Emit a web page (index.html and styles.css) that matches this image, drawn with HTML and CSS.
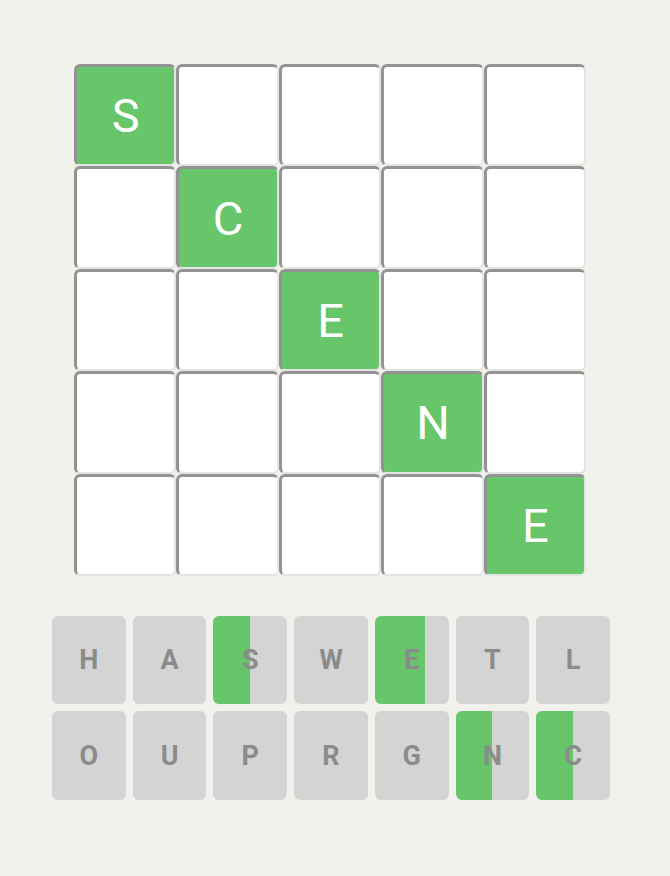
FILE: index.html
```html
<!DOCTYPE html>
<html>
<head>
<meta charset="utf-8">
<link rel="stylesheet" href="styles.css">
</head>
<body>
<main class="page">
  <div class="board">
    <div class="cell hit">S</div><div class="cell"></div><div class="cell"></div><div class="cell"></div><div class="cell"></div>
    <div class="cell"></div><div class="cell hit">C</div><div class="cell"></div><div class="cell"></div><div class="cell"></div>
    <div class="cell"></div><div class="cell"></div><div class="cell hit">E</div><div class="cell"></div><div class="cell"></div>
    <div class="cell"></div><div class="cell"></div><div class="cell"></div><div class="cell hit">N</div><div class="cell"></div>
    <div class="cell"></div><div class="cell"></div><div class="cell"></div><div class="cell"></div><div class="cell hit">E</div>
  </div>
  <div class="keys">
    <div class="key">H</div>
    <div class="key">A</div>
    <div class="key half">S</div>
    <div class="key">W</div>
    <div class="key twothirds">E</div>
    <div class="key">T</div>
    <div class="key">L</div>
    <div class="key">O</div>
    <div class="key">U</div>
    <div class="key">P</div>
    <div class="key">R</div>
    <div class="key">G</div>
    <div class="key half">N</div>
    <div class="key half">C</div>
  </div>
</main>
</body>
</html>
```
FILE: styles.css
```css
html, body {
  margin: 0;
  padding: 0;
  background: #f2f2ed;
}
.page {
  width: 670px;
  height: 876px;
  padding-top: 64px;
  box-sizing: border-box;
  display: flex;
  flex-direction: column;
  align-items: flex-start;
  font-family: Roboto, "Liberation Sans", sans-serif;
}
.board {
  margin-left: 74px;
  width: 512px;
  display: grid;
  grid-template-columns: repeat(5, 1fr);
  grid-auto-rows: 102.4px;
}
.cell {
  box-sizing: border-box;
  background: #ffffff;
  border-style: solid;
  border-width: 3px 2px 2px 3px;
  border-color: #939393 #e4e4e4 #e4e4e4 #939393;
  border-radius: 6px;
  display: flex;
  align-items: center;
  justify-content: center;
  color: #ffffff;
  font-size: 47px;
  font-weight: 400;
}
.cell.hit {
  background: #67c66a;
}
.keys {
  margin-top: 40px;
  margin-left: 52px;
  width: 558px;
  display: grid;
  grid-template-columns: repeat(7, 1fr);
  grid-auto-rows: 88.5px;
  gap: 7px;
}
.key {
  background: #d4d4d4;
  border-radius: 6px;
  display: flex;
  align-items: center;
  justify-content: center;
  color: #8b8b8b;
  font-size: 27px;
  font-weight: 700;
}
.key.half {
  background: linear-gradient(to right, #67c66a 49.5%, #d4d4d4 49.5%);
}
.key.twothirds {
  background: linear-gradient(to right, #67c66a 67%, #d4d4d4 67%);
}
```
